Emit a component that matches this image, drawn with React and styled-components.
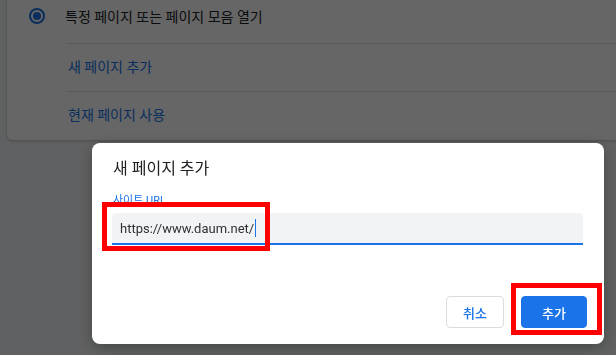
import React from 'react'
import styled, { createGlobalStyle } from 'styled-components'

const GlobalStyle = createGlobalStyle`
  html, body {
    margin: 0;
    padding: 0;
    width: 616px;
    height: 355px;
    overflow: hidden;
    background: #f1f3f4;
    font-family: Roboto, "Noto Sans CJK KR", "Noto Sans", sans-serif;
  }
`

const Page = styled.div`
  width: 616px;
  height: 355px;
  background: #f1f3f4;
  padding-left: 7px;
  box-sizing: border-box;
  overflow: hidden;
`

const Card = styled.div`
  width: 640px;
  height: 140px;
  background: #ffffff;
  border-radius: 0 0 6px 6px;
  box-shadow: 0 1px 3px rgba(60, 64, 67, 0.35);
`

const RadioRow = styled.div`
  display: flex;
  align-items: center;
  height: 31px;
  padding-left: 22px;
  gap: 20px;
  font-size: 14px;
  color: #202124;
`

const Radio = styled.span`
  width: 16px;
  height: 16px;
  border: 2px solid #1a73e8;
  border-radius: 50%;
  box-sizing: border-box;
  display: flex;
  align-items: center;
  justify-content: center;
  &::after {
    content: '';
    width: 8px;
    height: 8px;
    border-radius: 50%;
    background: #1a73e8;
  }
`

const SubList = styled.div`
  margin-top: 12px;
  margin-left: 60px;
`

const LinkRow = styled.div`
  display: flex;
  align-items: center;
  height: 48px;
  border-top: 1px solid #e0e0e0;
  padding: 0 0 3px 1px;
  box-sizing: border-box;
  font-size: 14px;
  color: #1a73e8;
`

const Scrim = styled.div`
  position: fixed;
  inset: 0;
  background: rgba(0, 0, 0, 0.6);
`

const Dialog = styled.div`
  position: fixed;
  left: 92px;
  top: 143px;
  width: 512px;
  height: 201px;
  background: #ffffff;
  border-radius: 8px;
  box-shadow: 0 4px 16px rgba(0, 0, 0, 0.3);
  box-sizing: border-box;
  display: flex;
  flex-direction: column;
`

const Body = styled.div`
  padding: 15px 21px 0 20px;
`

const Title = styled.div`
  font-size: 16px;
  line-height: 22px;
  color: #202124;
  padding-left: 1px;
`

const Label = styled.div`
  margin-top: 14px;
  font-size: 11px;
  line-height: 14px;
  color: #1a73e8;
  padding-left: 1px;
`

const Field = styled.div`
  margin-top: 5px;
  height: 32px;
  background: #f1f3f4;
  border-radius: 4px 4px 0 0;
  border-bottom: 2px solid #1a73e8;
  box-sizing: border-box;
  display: flex;
  align-items: center;
  padding-left: 8px;
  font-size: 13px;
  color: #303134;
`

const Caret = styled.span`
  display: inline-block;
  width: 1px;
  height: 18px;
  background: #1a73e8;
  margin-left: 1px;
`

const Footer = styled.div`
  margin-top: auto;
  padding: 0 17px 16px 0;
  display: flex;
  justify-content: flex-end;
  gap: 17px;
`

const Button = styled.button`
  height: 32px;
  width: ${p => p.$w}px;
  border-radius: 4px;
  border: 1px solid ${p => (p.$primary ? '#1a73e8' : '#dadce0')};
  background: ${p => (p.$primary ? '#1a73e8' : '#ffffff')};
  color: ${p => (p.$primary ? '#ffffff' : '#1a73e8')};
  font-family: Roboto, "Noto Sans CJK KR", sans-serif;
  font-size: 13px;
  font-weight: 500;
  padding: 0;
`

const Marker = styled.div`
  position: absolute;
  left: ${p => p.$x}px;
  top: ${p => p.$y}px;
  width: ${p => p.$w}px;
  height: ${p => p.$h}px;
  border: 5px solid #ff0000;
  box-sizing: border-box;
  pointer-events: none;
`

export default function App() {
  return (
    <>
      <GlobalStyle />
      <Page>
        <Card>
          <RadioRow>
            <Radio />
            특정 페이지 또는 페이지 모음 열기
          </RadioRow>
          <SubList>
            <LinkRow>새 페이지 추가</LinkRow>
            <LinkRow>현재 페이지 사용</LinkRow>
          </SubList>
        </Card>
      </Page>
      <Scrim />
      <Dialog>
        <Body>
          <Title>새 페이지 추가</Title>
          <Label>사이트 URL</Label>
          <Field>
            https://www.daum.net/
            <Caret />
          </Field>
        </Body>
        <Footer>
          <Button $w={58}>취소</Button>
          <Button $w={66} $primary>추가</Button>
        </Footer>
        <Marker $x={10} $y={59} $w={168} $h={49} />
        <Marker $x={419} $y={140} $w={91} $h={52} />
      </Dialog>
    </>
  )
}
